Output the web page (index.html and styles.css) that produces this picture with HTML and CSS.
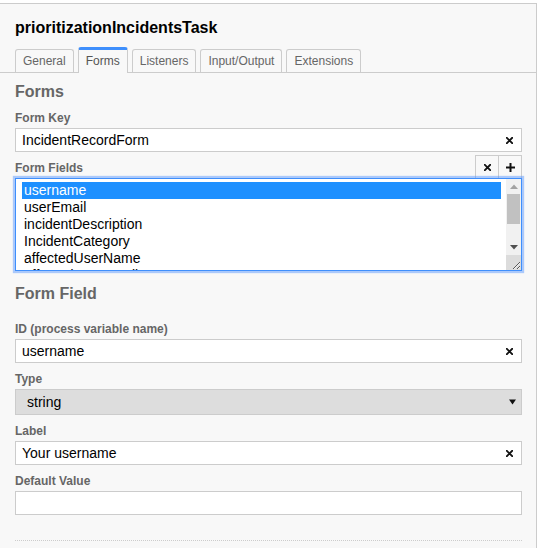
FILE: index.html
```html
<!DOCTYPE html>
<html>
<head>
<meta charset="utf-8">
<title>Properties</title>
<link rel="stylesheet" href="styles.css">
</head>
<body>
<div class="panel">
  <div class="header">
    <div class="title">prioritizationIncidentsTask</div>
  </div>
  <div class="tabbar">
    <a class="tab">General</a>
    <a class="tab active">Forms</a>
    <a class="tab">Listeners</a>
    <a class="tab">Input/Output</a>
    <a class="tab">Extensions</a>
  </div>
  <div class="content">
    <div class="group-label first">Forms</div>

    <div class="field">
      <div class="label">Form Key</div>
      <div class="input">
        <span class="value">IncidentRecordForm</span>
        <svg class="clear" width="7" height="7" viewBox="0 0 7 7"><path d="M0.8 0.8 L6.2 6.2 M6.2 0.8 L0.8 6.2" stroke="#111" stroke-width="1.9" stroke-linecap="square"/></svg>
      </div>
    </div>

    <div class="list-head">
      <div class="label">Form Fields</div>
      <div class="btns">
        <button class="btn"><svg width="7" height="7" viewBox="0 0 7 7"><path d="M0.8 0.8 L6.2 6.2 M6.2 0.8 L0.8 6.2" stroke="#111" stroke-width="1.9" stroke-linecap="square"/></svg></button>
        <button class="btn"><svg width="9" height="9" viewBox="0 0 9 9"><path d="M4.5 0 V9 M0 4.5 H9" stroke="#111" stroke-width="2"/></svg></button>
      </div>
    </div>
    <div class="listbox">
      <div class="opt selected">username</div>
      <div class="opt">userEmail</div>
      <div class="opt">incidentDescription</div>
      <div class="opt">IncidentCategory</div>
      <div class="opt">affectedUserName</div>
      <div class="opt">affectedUserEmail</div>
      <div class="opt">affectedDepartment</div>
      <div class="opt">incidentPriority</div>
      <div class="scrollbar">
        <div class="sb-btn"><svg width="8" height="5" viewBox="0 0 8 5"><path d="M0 5 H8 L4 0.5 Z" fill="#a3a3a3"/></svg></div>
        <div class="sb-track"><div class="sb-thumb"></div></div>
        <div class="sb-btn"><svg width="8" height="5" viewBox="0 0 8 5"><path d="M0 0 H8 L4 4.5 Z" fill="#505050"/></svg></div>
      </div>
      <div class="sb-corner"></div>
    </div>

    <div class="group-label second">Form Field</div>

    <div class="field">
      <div class="label">ID (process variable name)</div>
      <div class="input">
        <span class="value">username</span>
        <svg class="clear" width="7" height="7" viewBox="0 0 7 7"><path d="M0.8 0.8 L6.2 6.2 M6.2 0.8 L0.8 6.2" stroke="#111" stroke-width="1.9" stroke-linecap="square"/></svg>
      </div>
    </div>

    <div class="field">
      <div class="label">Type</div>
      <div class="select">
        <span class="value">string</span>
        <svg class="arrow" width="7" height="6" viewBox="0 0 7 6"><path d="M0 0.5 H7 L3.5 5.5 Z" fill="#111"/></svg>
      </div>
    </div>

    <div class="field">
      <div class="label">Label</div>
      <div class="input">
        <span class="value">Your username</span>
        <svg class="clear" width="7" height="7" viewBox="0 0 7 7"><path d="M0.8 0.8 L6.2 6.2 M6.2 0.8 L0.8 6.2" stroke="#111" stroke-width="1.9" stroke-linecap="square"/></svg>
      </div>
    </div>

    <div class="field">
      <div class="label">Default Value</div>
      <div class="input">
        <span class="value"></span>
      </div>
    </div>

    <div class="divider"></div>
  </div>
</div>
</body>
</html>
```

FILE: styles.css
```css
html, body {
  margin: 0;
  padding: 0;
  background: #ffffff;
}

body {
  font-family: "Liberation Sans", Arial, sans-serif;
  color: #000;
}

.panel {
  margin-top: 3px;
  width: 536px;
  height: 544px;
  overflow: hidden;
  background: #f8f8f8;
  border-top: 1px solid #ccc;
  border-right: 1px solid #ccc;
}

.header {
  padding: 15px 15px 10px 15px;
}

.title {
  font-size: 16px;
  line-height: 18px;
  font-weight: bold;
  color: #000;
}

.tabbar {
  display: flex;
  align-items: flex-end;
  gap: 4px;
  padding: 0 15px;
  border-bottom: 1px solid #ccc;
}

.tab {
  display: block;
  font-size: 12px;
  line-height: 22px;
  padding: 0 7px;
  color: #666;
  background: #f8f8f8;
  border: 1px solid #ccc;
  border-bottom: none;
  border-radius: 3px 3px 0 0;
}

.tab.active {
  border-top: 3px solid #3f8ffc;
  padding-bottom: 1px;
  margin-bottom: -1px;
  color: #555;
}

.content {
  padding: 0 14px 0 15px;
}

.group-label {
  font-size: 16px;
  line-height: 18px;
  font-weight: bold;
  color: #666;
}

.group-label.first {
  margin: 10px 0 10px 0;
}

.group-label.second {
  margin: 14px 0 19px 0;
}

.label {
  font-size: 12px;
  line-height: 14px;
  font-weight: bold;
  color: #666;
}

.field {
  margin-bottom: 9px;
}

.field > .label {
  margin-bottom: 3px;
}

.input {
  display: flex;
  align-items: center;
  height: 22px;
  border: 1px solid #ccc;
  background: #fff;
  padding: 0 8px 0 6px;
}

.input .value, .select .value {
  flex: 1;
  font-size: 14px;
  line-height: 22px;
  color: #000;
}

.clear {
  display: block;
  flex: none;
}

.select {
  display: flex;
  align-items: center;
  height: 24px;
  border: 1px solid #ccc;
  background: #dddddd;
  padding: 0 5px 0 11px;
}

.select .value {
  line-height: 24px;
}

.arrow {
  display: block;
  flex: none;
}

.list-head {
  margin-top: -6px;
  display: flex;
  justify-content: space-between;
  align-items: flex-end;
}

.list-head .label {
  margin-bottom: 3px;
}

.btns {
  display: flex;
}

.btn {
  width: 24px;
  height: 23px;
  margin: 0 0 0 -1px;
  padding: 0;
  border: 1px solid #ccc;
  border-bottom: none;
  background: #f8f8f8;
  display: flex;
  align-items: center;
  justify-content: center;
}

.listbox {
  position: relative;
  box-sizing: border-box;
  height: 93px;
  border: 1px solid #3f8ffc;
  box-shadow: 0 0 1px 2px rgba(77, 144, 254, 0.45);
  background: #fff;
  overflow: hidden;
  resize: vertical;
  padding: 3px 20px 3px 6px;
}

.opt {
  font-size: 14px;
  line-height: 16px;
  padding: 0 2px 1px 2px;
  color: #000;
  white-space: nowrap;
}

.opt.selected {
  background: #1e90ff;
  color: #fff;
}

.scrollbar {
  position: absolute;
  top: 0;
  right: 0;
  bottom: 15px;
  width: 15px;
  display: flex;
  flex-direction: column;
  background: #f1f1f1;
}

.sb-btn {
  height: 15px;
  flex: none;
  display: flex;
  align-items: center;
  justify-content: center;
}

.sb-btn svg {
  display: block;
}

.sb-track {
  flex: 1;
  padding: 0 1px;
}

.sb-thumb {
  height: 30px;
  background: #c1c1c1;
}

.sb-corner {
  position: absolute;
  right: 0;
  bottom: 0;
  width: 15px;
  height: 15px;
  background: #dcdcdc;
}

.divider {
  margin-top: 25px;
  border-top: 1px dotted #ccc;
}
```
